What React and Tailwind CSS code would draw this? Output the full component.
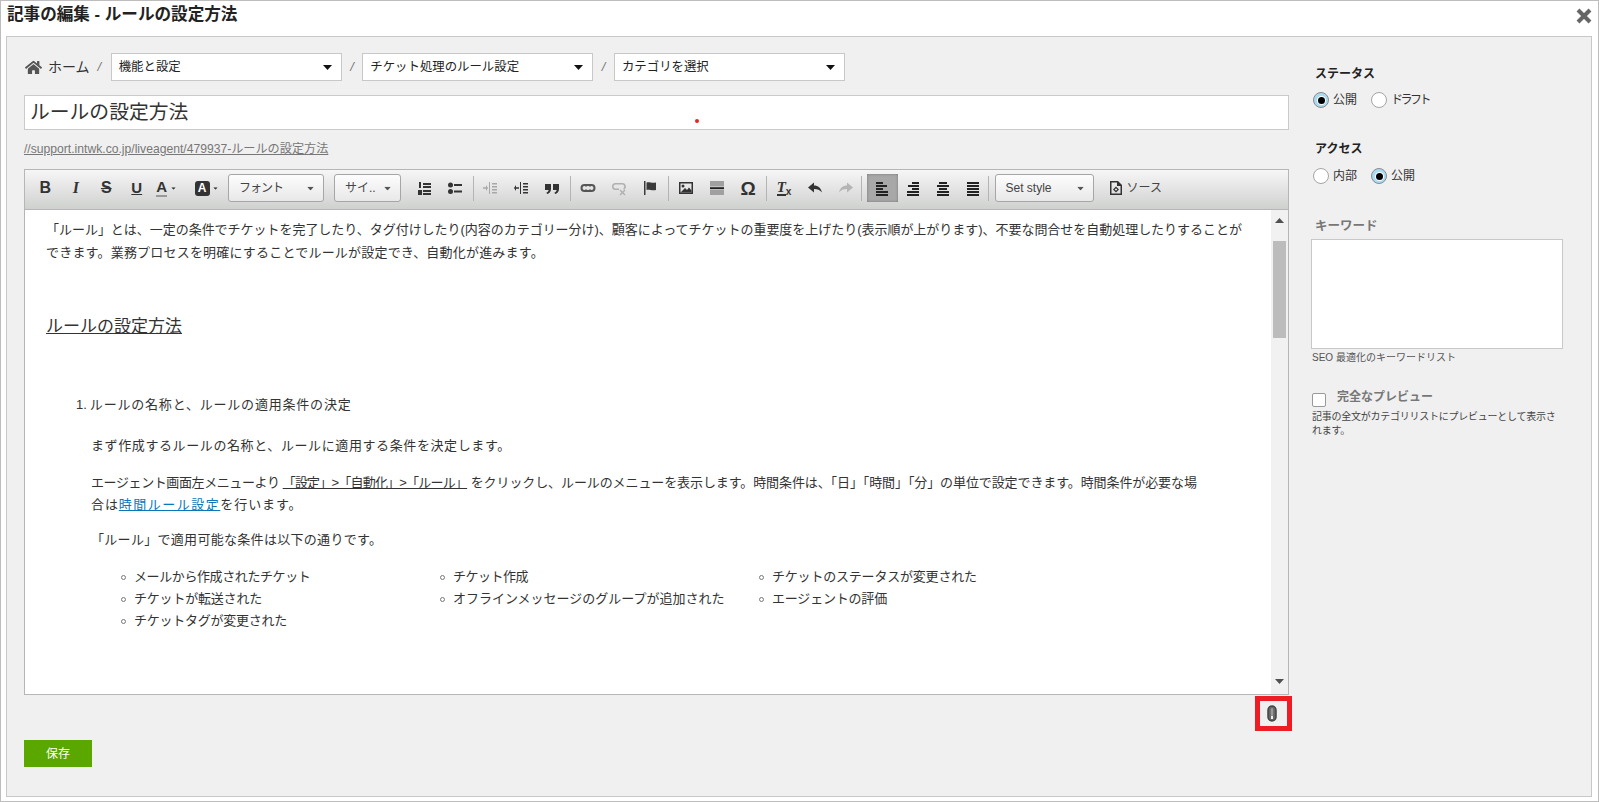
import { FaHome } from "react-icons/fa";

const Caret = ({ className = "" }) => (
  <svg width="9" height="5" viewBox="0 0 9 5" className={className}>
    <path d="M0 0h9L4.5 5z" fill="currentColor" />
  </svg>
);

const Btn = ({ w = "w-[31px]", className = "", children }) => (
  <div className={`flex h-7 shrink-0 items-center justify-center ${w} ${className}`}>{children}</div>
);

const Sep = ({ className = "" }) => <div className={`h-[25px] w-px shrink-0 bg-[#b4b4b4] ${className}`} />;

const Ico = ({ children, color = "#333", w = 16, h = 16 }) => (
  <svg width={w} height={h} viewBox="0 0 16 16" fill={color} stroke="none">
    {children}
  </svg>
);

const Lines = ({ rows, color = "#222" }) => (
  <Ico color={color}>
    {rows.map(([x, y, w], i) => (
      <rect key={i} x={x} y={y} width={w} height="2" />
    ))}
  </Ico>
);

const ToolSelect = ({ w, label, className = "", labelClass = "" }) => (
  <div
    className={`flex h-[28px] shrink-0 items-center justify-between rounded-[3px] border border-[#a6a6a6] bg-linear-to-b from-[#fdfdfd] to-[#e8e8e8] pl-[10px] pr-2 text-[12px] text-[#444] ${w} ${className}`}
  >
    <span className={labelClass}>{label}</span>
    <Caret className="scale-75 text-[#555]" />
  </div>
);

const Toolbar = () => (
  <div className="flex h-10 items-center border-b border-[#b6b6b6] bg-linear-to-b from-[#f6f6f6] to-[#cfd1cf] pb-[3px] pl-[5px]">
    <Btn w="w-[30.5px]" className="text-[16px] font-bold text-[#333]">B</Btn>
    <Btn w="w-[30.5px]" className="text-[16px] font-bold italic text-[#333] [font-family:'Liberation_Serif',serif]">I</Btn>
    <Btn w="w-[30.5px]" className="text-[16px] font-bold text-[#333] line-through">S</Btn>
    <Btn w="w-[30.5px]" className="text-[15px] font-bold text-[#333] underline">U</Btn>
    <Btn w="w-[30.5px]" className="gap-[2px] text-[#333]">
      <span className="border-b-2 border-[#999] text-[15px] leading-[16px] font-bold">A</span>
      <Caret className="scale-50" />
    </Btn>
    <Btn w="w-[30px]" className="ml-[9.5px] gap-[1px] text-[#333]">
      <span className="flex h-[15px] w-[15px] items-center justify-center rounded-[3px] bg-[#333] text-[12px] font-bold text-white">A</span>
      <Caret className="scale-50" />
    </Btn>
    <ToolSelect w="w-[96px]" label="フォント" className="ml-[6px]" labelClass="tracking-[-1px]" />
    <ToolSelect w="w-[67px]" label="サイ.." className="ml-[10px]" />
    <Btn className="ml-[7.5px]">
      <Ico>
        <rect x="7" y="3" width="8" height="2" />
        <rect x="7" y="6" width="8" height="2" />
        <rect x="7" y="10" width="8" height="2" />
        <rect x="7" y="13" width="8" height="2" />
        <rect x="3" y="2" width="2" height="6" />
        <rect x="2" y="10" width="4" height="5" />
      </Ico>
    </Btn>
    <Btn>
      <Ico>
        <circle cx="3.5" cy="5" r="2.5" />
        <circle cx="3.5" cy="11.5" r="2.5" />
        <rect x="7" y="4" width="8" height="2" />
        <rect x="7" y="10.5" width="8" height="2" />
      </Ico>
    </Btn>
    <Sep className="ml-[2px]" />
    <Btn className="ml-[1px]">
      <Ico color="#a8a8a8">
        <path d="M7 2h1v12H7zM10 3h5v1.500h-5zM10 6h5v1.500h-5zM10 9h5v1.500h-5zM10 12h5v1.500h-5zM1 7.200h3V5l2 3-2 3V8.800H1z" />
      </Ico>
    </Btn>
    <Btn>
      <Ico color="#333">
        <path d="M7 2h1v12H7zM10 3h5v1.500h-5zM10 6h5v1.500h-5zM10 9h5v1.500h-5zM10 12h5v1.500h-5zM6 7.200H3V5L1 8l2 3V8.800h3z" />
      </Ico>
    </Btn>
    <Btn>
      <Ico>
        <path d="M1 4h6v5c0 3-2 4.500-4 5l-.5-1.500C4 12 4.500 11 4.500 10H1zM9 4h6v5c0 3-2 4.500-4 5l-.5-1.500C12 12 12.500 11 12.500 10H9z" />
      </Ico>
    </Btn>
    <Sep className="ml-[2px]" />
    <Btn className="ml-[1.5px]">
      <Ico color="#555">
        <path d="M4.500 4h4C10 4 11 5 11 6.500h-2C9 6 8.700 6 8.500 6h-4a2 2 0 0 0 0 4h4c.2 0 .5 0 .5-.5h2C11 11 10 12 8.500 12h-4a4 4 0 0 1 0-8zM7.500 4h4a4 4 0 0 1 0 8h-4C6 12 5 11 5 9.500h2c0 .5.3.5.5.5h4a2 2 0 0 0 0-4h-4c-.2 0-.5 0-.5.500H5C5 5 6 4 7.500 4z" />
      </Ico>
    </Btn>
    <Btn>
      <Ico color="#b0b0b0">
        <path d="M4.500 3h7a3.500 3.500 0 0 1 1 6.800V8a2 2 0 0 0-1-3.500h-7a2 2 0 0 0 0 4H8V10H4.500a3.500 3.500 0 0 1 0-7zM9.500 9.500l2 2 2-2 1 1-2 2 2 2-1 1-2-2-2 2-1-1 2-2-2-2z" />
      </Ico>
    </Btn>
    <Btn>
      <Ico color="#3a3a3a">
        <path d="M2 1h1.500v14H2zM4.500 2.500c3-1.200 5 1.200 9.500 0v7.500c-4.500 1.200-6.500-1.200-9.500 0z" />
      </Ico>
    </Btn>
    <Sep className="ml-[3px]" />
    <Btn className="ml-[1.5px]">
      <Ico>
        <path fillRule="evenodd" d="M1 2h14v12H1zM2.500 3.500v9h11v-9z" />
        <circle cx="5" cy="6" r="1.500" />
        <path d="M2.500 12.500 7 8l2 2 2-2.500 2.500 3v2z" />
      </Ico>
    </Btn>
    <Btn>
      <Ico>
        <rect x="1" y="1" width="14" height="5.500" fill="#a0a0a0" />
        <rect x="1" y="7.200" width="14" height="2" fill="#222" />
        <rect x="1" y="10" width="14" height="5" fill="#a0a0a0" />
      </Ico>
    </Btn>
    <Btn className="text-[19px] leading-none font-bold text-[#333]">Ω</Btn>
    <Sep className="ml-[2px]" />
    <Btn className="ml-[2px] text-[#333]">
      <span className="border-b-2 border-[#333] text-[15px] leading-[14px] font-bold italic [font-family:'Liberation_Serif',serif]">T</span>
      <span className="self-end pb-[5px] text-[10px] leading-none font-bold">x</span>
    </Btn>
    <Btn>
      <Ico>
        <path d="M1 7.500 7 2.500v3c4 0 7 2.500 8 7-2-2.500-4.500-3.500-8-3.500v3.500z" />
      </Ico>
    </Btn>
    <Btn w="w-[30px]">
      <Ico color="#b5b5b5">
        <path d="M15 7.500 9 2.500v3c-4 0-7 2.500-8 7 2-2.500 4.500-3.500 8-3.500v3.500z" />
      </Ico>
    </Btn>
    <Sep />
    <Btn className="ml-[5px] bg-[#a8a8a8] shadow-[inset_0_0_3px_#777]">
      <Lines rows={[[2, 2, 7], [2, 5, 11], [2, 8, 7], [2, 11, 12], [2, 14, 12]]} />
    </Btn>
    <Btn w="w-[30.5px]">
      <Lines rows={[[7, 2, 7], [3, 5, 11], [7, 8, 7], [2, 11, 12], [2, 14, 12]]} />
    </Btn>
    <Btn w="w-[30.5px]">
      <Lines rows={[[4, 2, 8], [2, 5, 12], [4, 8, 8], [2, 11, 12], [2, 14, 12]]} />
    </Btn>
    <Btn w="w-[29px]">
      <Lines rows={[[2, 2, 12], [2, 5, 12], [2, 8, 12], [2, 11, 12], [2, 14, 12]]} />
    </Btn>
    <Sep />
    <ToolSelect w="w-[99px]" label="Set style" className="ml-[6px]" />
    <div className="ml-[14px] flex items-center gap-[3px] text-[12px] text-[#444]">
      <Ico>
        <path fillRule="evenodd" d="M2 1h8l4 4v10H2zM3.500 2.500v11h9V6H9V2.500z" />
        <path d="M8 6.500 11 9.500 8 12.500 5 9.500zM8 8.200 6.700 9.500 8 10.800 9.300 9.500z" fillRule="evenodd" />
      </Ico>
      <span>ソース</span>
    </div>
  </div>
);

const Bullet = ({ className = "", children }) => (
  <div className="flex h-[22px] items-center">
    <span className="ml-[-13px] mr-[8px] h-[5px] w-[5px] shrink-0 rounded-full border border-[#777]" />
    <span className={className}>{children}</span>
  </div>
);

const Editor = () => (
  <div className="flex h-[526px] flex-col border border-[#b6b6b6] bg-white">
    <Toolbar />
    <div className="flex min-h-0 flex-1">
      <div className="min-w-0 flex-1 whitespace-nowrap pl-[21px] pt-[9px] text-[13px] leading-[22.5px] text-[#333]">
        <p>
          <span className="tracking-[-0.03px]">
            「ルール」とは、一定の条件でチケットを完了したり、タグ付けしたり(内容のカテゴリー分け)、顧客によってチケットの重要度を上げたり(表示順が上がります)、不要な問合せを自動処理したりすることが
          </span>
          <br />
          <span className="tracking-[0.2px]">できます。業務プロセスを明確にすることでルールが設定でき、自動化が進みます。</span>
        </p>
        <p className="mt-[51px] text-[17px] leading-[24px] underline">ルールの設定方法</p>
        <div className="ml-[30px] mt-[55px] flex h-[22px] items-center gap-[3px]">
          <span>1.</span>
          <span className="tracking-[0.8px]">ルールの名称と、ルールの適用条件の決定</span>
        </div>
        <div className="ml-[45px]">
          <p className="mt-[19px] tracking-[0.6px]">まず作成するルールの名称と、ルールに適用する条件を決定します。</p>
          <p className="mt-[14px]">
            <span className="tracking-[-0.4px]">エージェント画面左メニューより </span>
            <span className="tracking-[-0.8px] underline">「設定」&gt;「自動化」&gt;「ルール」</span>{" "}
            <span className="tracking-[-0.1px]">をクリックし、ルールのメニューを表示します。時間条件は、「日」「時間」「分」の単位で設定できます。時間条件が必要な場</span>
            <br />
            <span className="tracking-[0.9px]">合は</span>
            <span className="tracking-[1.5px] text-[#0a77bb] underline">時間ルール設定</span>
            <span className="tracking-[0.9px]">を行います。</span>
          </p>
          <p className="mt-[12px] tracking-[0.3px]">「ルール」で適用可能な条件は以下の通りです。</p>
          <div className="ml-[43px] mt-[15px] grid w-[957px] grid-cols-3">
            <Bullet className="tracking-[-0.4px]">メールから作成されたチケット</Bullet>
            <Bullet className="tracking-[-0.5px]">チケット作成</Bullet>
            <Bullet className="tracking-[-0.2px]">チケットのステータスが変更された</Bullet>
            <Bullet className="tracking-[-0.2px]">チケットが転送された</Bullet>
            <Bullet>オフラインメッセージのグループが追加された</Bullet>
            <Bullet className="tracking-[-0.2px]">エージェントの評価</Bullet>
            <Bullet className="tracking-[-0.25px]">チケットタグが変更された</Bullet>
          </div>
        </div>
      </div>
      <div className="flex w-[17px] shrink-0 flex-col items-center bg-[#f1f1f1]">
        <div className="flex h-[31px] w-full justify-center pt-2">
          <Caret className="rotate-180 text-[#505050]" />
        </div>
        <div className="h-[97px] w-[13px] bg-[#bcbcbc]" />
        <div className="flex-1" />
        <div className="flex h-[15px] w-full justify-center">
          <Caret className="text-[#505050]" />
        </div>
      </div>
    </div>
  </div>
);

const Crumb = ({ label }) => (
  <div className="flex h-[28px] w-[231px] items-center justify-between border border-[#c8c8c8] bg-white pl-[7px] pr-[9px] text-[12.400px] text-[#222]">
    <span>{label}</span>
    <Caret className="text-[#111]" />
  </div>
);

const Slash = ({ className = "" }) => <span className={`text-[13px] text-[#777] italic ${className}`}>/</span>;

const Radio = ({ checked }) => (
  <span
    className={`flex h-[16px] w-[16px] shrink-0 items-center justify-center rounded-full border ${
      checked ? "border-[#8a8a8a] bg-[#a9dcf3]" : "border-[#a5a5a5] bg-white"
    }`}
  >
    {checked && <span className="h-[7px] w-[7px] rounded-full bg-black shadow-[0_0_0_1px_#fff]" />}
  </span>
);

const RadioRow = ({ left, right, leftOn, className = "", rightClass = "" }) => (
  <div className={`flex h-[18px] items-center pl-[2px] text-[12px] text-[#333] ${className}`}>
    <Radio checked={leftOn} />
    <span className="ml-[4px] w-[38px]">{left}</span>
    <Radio checked={!leftOn} />
    <span className={`ml-[4px] ${rightClass}`}>{right}</span>
  </div>
);

const Sidebar = () => (
  <div className="ml-[22px] w-[252px] pt-[28px]">
    <h3 className="pl-[4px] text-[12px] leading-[18px] font-bold text-[#222]">ステータス</h3>
    <RadioRow left="公開" right="ドラフト" leftOn className="mt-[8px]" rightClass="-ml-px tracking-[-2.500px]" />
    <h3 className="mt-[31px] pl-[4px] text-[12px] leading-[18px] font-bold text-[#222]">アクセス</h3>
    <RadioRow left="内部" right="公開" className="mt-[9px]" />
    <h3 className="mt-[32px] pl-[4px] text-[12.500px] leading-[18px] font-bold text-[#777]">キーワード</h3>
    <div className="mt-[4px] h-[110px] border border-[#c8c8c8] bg-white" />
    <p className="mt-[2px] pl-px text-[10px] leading-[14px] text-[#555]">SEO 最適化のキーワードリスト</p>
    <div className="mt-[23px] flex h-[18px] pl-px">
      <span className="mt-[5px] h-[14px] w-[14px] rounded-[2px] border border-[#999] bg-white" />
      <span className="ml-[11px] mt-px text-[12px] leading-[16px] font-bold text-[#777]">完全なプレビュー</span>
    </div>
    <p className="mt-[4px] w-[252px] pl-px text-[10px] leading-[14px] tracking-[-0.25px] text-[#444]">
      記事の全文がカテゴリリストにプレビューとして表示さ
      <br />
      れます。
    </p>
  </div>
);

export default function App() {
  return (
    <div className="relative h-[802px] w-[1599px] overflow-hidden border border-[#bdbdbd] bg-white [font-family:'Liberation_Sans','Noto_Sans_CJK_JP',sans-serif]">
      <div className="flex h-[35px] items-start justify-between pl-[6px] pr-[6px] pt-[4px]">
        <h1 className="text-[16.600px] leading-[20px] font-bold text-[#222]">記事の編集 - ルールの設定方法</h1>
        <svg width="16" height="16" viewBox="0 0 16 16" className="mt-[3px]">
          <path d="M2 2l12 12M14 2 2 14" stroke="#666" strokeWidth="4" />
        </svg>
      </div>
      <div className="ml-[5px] mr-[6px] flex h-[761px] border border-[#c8c8c8] bg-[#f0f0f0] pl-[17px]">
        <div className="w-[1265px] shrink-0 pt-[16px]">
          <div className="flex items-center">
            <FaHome className="ml-px text-[17px] text-[#555]" />
            <span className="ml-[6px] text-[14px] text-[#333]">ホーム</span>
            <Slash className="ml-[8px] mr-[9.500px]" />
            <Crumb label="機能と設定" />
            <Slash className="mx-[8.500px]" />
            <Crumb label="チケット処理のルール設定" />
            <Slash className="mx-[8.500px]" />
            <Crumb label="カテゴリを選択" />
          </div>
          <div className="relative mt-[14px] flex h-[35px] items-center border border-[#cacaca] bg-white pl-[5px] text-[19.800px] text-[#333]">
            ルールの設定方法
            <span className="absolute left-[670px] top-[23px] h-[4px] w-[4px] rounded-full bg-[#ee2222]" />
          </div>
          <a className="mt-[11px] block h-[16px] text-[12.150px] leading-[16px] text-[#777] underline">
            //support.intwk.co.jp/liveagent/479937-ルールの設定方法
          </a>
          <div className="mt-[12px]">
            <Editor />
          </div>
          <div className="-mr-[3px] mt-[1px] flex justify-end">
            <div className="flex h-[35px] w-[37px] items-center justify-center border-[5px] border-[#ee1c25]">
              <svg width="10" height="17" viewBox="0 0 10 17" className="mr-[3px]">
                <rect x="1" y="1" width="8" height="15" rx="4" fill="#666" stroke="#444" strokeWidth="1.500" />
                <rect x="3.800" y="3" width="2.400" height="8" rx="1.200" fill="#999" />
                <rect x="4" y="11" width="2" height="3" fill="#eee" />
              </svg>
            </div>
          </div>
          <button className="mt-[9px] flex h-[27px] w-[68px] items-center justify-center bg-[#5aa700] text-[12px] text-white">
            保存
          </button>
        </div>
        <Sidebar />
      </div>
    </div>
  );
}
